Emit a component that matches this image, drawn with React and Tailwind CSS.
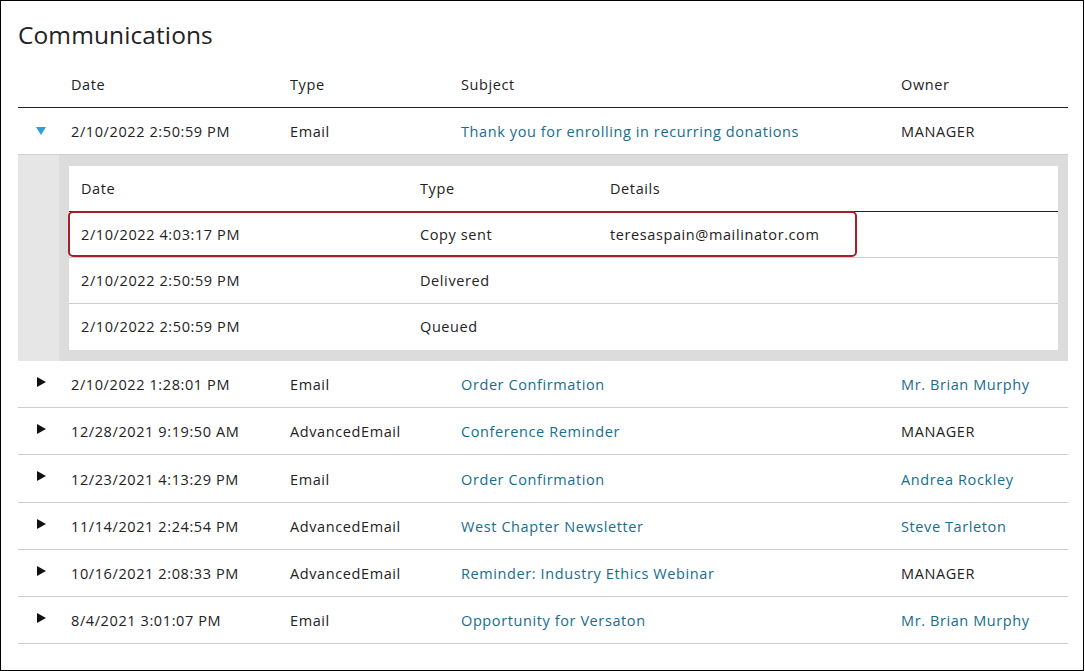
import React from 'react';

const rows = [
  { date: '2/10/2022 1:28:01 PM', type: 'Email', subject: 'Order Confirmation', owner: 'Mr. Brian Murphy', ownerLink: true },
  { date: '12/28/2021 9:19:50 AM', type: 'AdvancedEmail', subject: 'Conference Reminder', owner: 'MANAGER' },
  { date: '12/23/2021 4:13:29 PM', type: 'Email', subject: 'Order Confirmation', owner: 'Andrea Rockley', ownerLink: true },
  { date: '11/14/2021 2:24:54 PM', type: 'AdvancedEmail', subject: 'West Chapter Newsletter', owner: 'Steve Tarleton', ownerLink: true },
  { date: '10/16/2021 2:08:33 PM', type: 'AdvancedEmail', subject: 'Reminder: Industry Ethics Webinar', owner: 'MANAGER' },
  { date: '8/4/2021 3:01:07 PM', type: 'Email', subject: 'Opportunity for Versaton', owner: 'Mr. Brian Murphy', ownerLink: true },
];

const details = [
  { date: '2/10/2022 4:03:17 PM', type: 'Copy sent', details: 'teresaspain@mailinator.com' },
  { date: '2/10/2022 2:50:59 PM', type: 'Delivered', details: '' },
  { date: '2/10/2022 2:50:59 PM', type: 'Queued', details: '' },
];

const cols = 'grid grid-cols-[53px_219px_171px_440px_1fr] items-center';
const subCols = 'grid grid-cols-[339px_190px_1fr] items-center pl-[12px]';

function Caret({ open }) {
  if (open) {
    return (
      <svg width="10" height="8" viewBox="0 0 10 8" className="ml-[18px] -mt-[3px]">
        <path d="M0 0 H10 L5 8 Z" fill="#2a9fd8" />
      </svg>
    );
  }
  return (
    <svg width="9" height="10" viewBox="0 0 9 10" className="ml-[19px] -mt-[6px]">
      <path d="M0 0 L9 5 L0 10 Z" fill="#111" />
    </svg>
  );
}

export default function App() {
  return (
    <div
      className="w-[1084px] h-[671px] border border-black bg-white text-[#222] text-[14.5px] tracking-[0.6px]"
      style={{ fontFamily: '"Open Sans", Arial, sans-serif' }}
    >
      <div className="pl-[17px] pr-[15px]">
        <h2 className="text-[24.5px] tracking-[0.1px] pt-[18px] leading-[31px]">Communications</h2>

        <div className={`${cols} h-[58px] pt-[12px] border-b border-[#222]`}>
          <div />
          <div>Date</div>
          <div>Type</div>
          <div>Subject</div>
          <div>Owner</div>
        </div>

        <div className={`${cols} h-[46px] pt-[2px]`}>
          <Caret open />
          <div>2/10/2022 2:50:59 PM</div>
          <div>Email</div>
          <div className="text-[#176d8d]">Thank you for enrolling in recurring donations</div>
          <div>MANAGER</div>
        </div>

        <div className="flex bg-[#dcdcdc] border-t border-[#cfcfcf] h-[207px]">
          <div className="w-[41px] bg-[#e6e6e6]" />
          <div className="flex-1 pl-[10px] pr-[10px] pt-[11px] pb-[10px]">
            <div className="relative bg-white">
              <div className={`${subCols} h-[46px] border-b border-[#222]`}>
                <div>Date</div>
                <div>Type</div>
                <div>Details</div>
              </div>
              {details.map((d, i) => (
                <div
                  key={i}
                  className={`${subCols} h-[46px] ${i < details.length - 1 ? 'border-b border-[#cccccc]' : ''}`}
                >
                  <div>{d.date}</div>
                  <div>{d.type}</div>
                  <div>{d.details}</div>
                </div>
              ))}
              <div className="absolute left-[-1px] top-[45px] w-[789px] h-[46px] border-2 border-[#a81f2a] rounded-[5px]" />
            </div>
          </div>
        </div>

        {rows.map((r, i) => (
          <div key={i} className={`${cols} h-[47.2px] pt-[2px] border-b border-[#cccccc]`}>
            <Caret />
            <div>{r.date}</div>
            <div>{r.type}</div>
            <div className="text-[#176d8d]">{r.subject}</div>
            <div className={r.ownerLink ? 'text-[#176d8d]' : ''}>{r.owner}</div>
          </div>
        ))}
      </div>
    </div>
  );
}
